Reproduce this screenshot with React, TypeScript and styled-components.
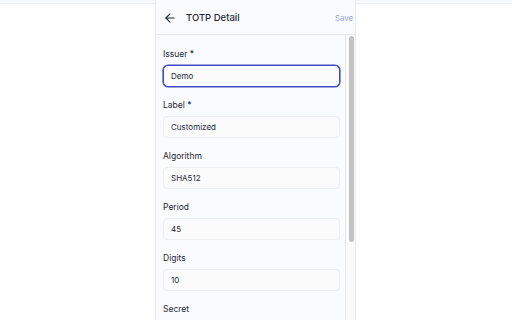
import React from "react";
import styled, { createGlobalStyle } from "styled-components";
import { ArrowLeft } from "lucide-react";

const Global = createGlobalStyle`
  html, body { margin: 0; padding: 0; background: #ffffff; }
  body { font-family: Inter, "Noto Sans", sans-serif; -webkit-font-smoothing: antialiased; }
  * { box-sizing: border-box; }
`;

const Page = styled.div`
  position: relative;
  width: 512px;
  height: 320px;
  overflow: hidden;
  display: flex;
  flex-direction: column;
  align-items: center;
`;

const TopStrip = styled.div`
  position: absolute;
  top: 0;
  left: 0;
  right: 0;
  height: 4px;
  background: #f7f8fa;
  border-bottom: 1px solid #eceef2;
`;

const Panel = styled.div`
  position: relative;
  margin-left: -1px;
  width: 201px;
  height: 320px;
  background: #fafbfc;
  border-left: 1px solid #e6e8ec;
  border-right: 1px solid #e6e8ec;
  display: flex;
  flex-direction: column;
`;

const Header = styled.div`
  height: 35px;
  flex: none;
  display: flex;
  align-items: center;
  padding: 0 2px 0 6px;
  border-bottom: 1px solid #e6e8ec;
`;

const BackButton = styled.button`
  border: 0;
  background: transparent;
  padding: 0;
  width: 15px;
  height: 15px;
  display: flex;
  align-items: center;
  justify-content: center;
  color: #1f2937;
  margin-top: 1px;
`;

const Title = styled.div`
  flex: 1;
  margin-left: 9px;
  font-size: 9.5px;
  font-weight: 500;
  color: #1f2937;
  margin-top: 1px;
`;

const Save = styled.button`
  border: 0;
  background: transparent;
  padding: 0;
  font-family: Inter, sans-serif;
  font-size: 7.8px;
  color: #9ca1de;
  margin-top: 1px;
`;

const Body = styled.div`
  flex: 1;
  min-height: 0;
  display: flex;
`;

const Scroll = styled.div`
  flex: 1;
  overflow: hidden;
`;

const Track = styled.div`
  width: 10px;
  flex: none;
  background: #fafafa;
  border-left: 1px solid #e8e8e8;
  padding: 1px 1px 0 3px;
`;

const Thumb = styled.div`
  width: 5px;
  background: #c1c1c1;
  border-radius: 3px;
`;

const Form = styled.div`
  padding: 12px 5px 60px 7px;
  display: flex;
  flex-direction: column;
  gap: 11px;
`;

const Field = styled.div`
  display: flex;
  flex-direction: column;
  gap: 4px;
`;

const Label = styled.label`
  font-size: 8.5px;
  line-height: 14px;
  color: #1f2937;
`;

const Input = styled.div<{ $focused?: boolean }>`
  height: 22px;
  display: flex;
  align-items: center;
  padding: 0 7px;
  font-size: 8px;
  color: #1f2937;
  background: #fbfbfc;
  border-radius: ${(p) => (p.$focused ? "5px" : "4px")};
  border: 1px solid ${(p) => (p.$focused ? "#3f4ac6" : "#eceef1")};
  box-shadow: ${(p) => (p.$focused ? "0 0 0 0.6px #3f4ac6" : "none")};
`;

const fields = [
  { label: "Issuer *", value: "Demo", focused: true },
  { label: "Label *", value: "Customized" },
  { label: "Algorithm", value: "SHA512" },
  { label: "Period", value: "45" },
  { label: "Digits", value: "10" },
  { label: "Secret", value: "" },
];

export default function App() {
  return (
    <>
      <Global />
      <Page>
        <TopStrip />
        <Panel>
          <Header>
            <BackButton>
              <ArrowLeft size={14} strokeWidth={2} />
            </BackButton>
            <Title>TOTP Detail</Title>
            <Save>Save</Save>
          </Header>
          <Body>
            <Scroll>
              <Form>
                {fields.map((f) => (
                  <Field key={f.label}>
                    <Label>{f.label}</Label>
                    <Input $focused={f.focused}>{f.value}</Input>
                  </Field>
                ))}
              </Form>
            </Scroll>
            <Track>
              <Thumb style={{ height: 206 }} />
            </Track>
          </Body>
        </Panel>
      </Page>
    </>
  );
}
